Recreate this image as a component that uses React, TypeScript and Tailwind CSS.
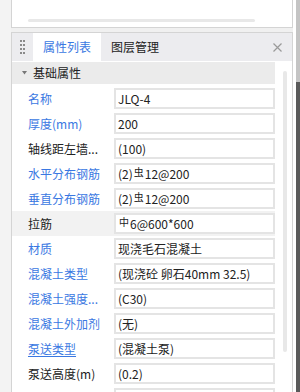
import React from 'react';

type Row = {
    name: string;
    value: React.ReactNode;
    link?: boolean;
    underline?: boolean;
    active?: boolean;
};

const Bar = ({ kind }: { kind: 'a' | 'c' }) => (
    <span className="relative top-[-2px] mx-[1px] text-[10px] leading-none">{kind === 'c' ? '虫' : '中'}</span>
);

const rows: Row[] = [
    { name: '名称', value: 'JLQ-4', link: true },
    { name: '厚度(mm)', value: '200', link: true },
    { name: '轴线距左墙...', value: '(100)' },
    { name: '水平分布钢筋', value: <>(2)<Bar kind="c" />12@200</>, link: true },
    { name: '垂直分布钢筋', value: <>(2)<Bar kind="c" />12@200</>, link: true },
    { name: '拉筋', value: <><Bar kind="a" />6@600*600</>, active: true },
    { name: '材质', value: '现浇毛石混凝土', link: true },
    { name: '混凝土类型', value: '(现浇砼 卵石40mm 32.5)', link: true },
    { name: '混凝土强度...', value: '(C30)', link: true },
    { name: '混凝土外加剂', value: '(无)', link: true },
    { name: '泵送类型', value: '(混凝土泵)', link: true, underline: true },
    { name: '泵送高度(m)', value: '(0.2)' },
    { name: '', value: '' },
];

const PropRow = ({ row }: { row: Row }) => (
    <div className={`flex h-[25px] items-center ${row.active ? 'bg-[#f2f2f2]' : ''}`}>
        <div
            className={`w-[102px] shrink-0 pl-[16px] whitespace-nowrap ${row.link ? 'text-[#3a78e2]' : 'text-[#222]'} ${row.underline ? 'underline underline-offset-2' : ''}`}
        >
            {row.name}
        </div>
        <div className="flex h-[21px] w-[161px] shrink-0 items-center whitespace-nowrap border-2 border-[#e4e4e4] bg-white pl-[2px] text-[#222]">
            {row.value}
        </div>
    </div>
);

export default function App() {
    return (
        <div
            className="flex h-[392px] w-[300px] overflow-hidden bg-[#f3f3f3] text-[12px]"
            style={{ fontFamily: '"Noto Sans CJK SC", "Noto Sans", sans-serif' }}
        >
            <div className="w-[11px] shrink-0 bg-[#f3f3f3]" />
            <div className="flex w-[282px] shrink-0 flex-col">
                {/* upper panel */}
                <div className="h-[28px] shrink-0 border-x border-b border-[#d4d4d4] bg-white pt-[19px] pl-[16px]">
                    <div className="h-[3px] w-[227px] rounded-full bg-[#e8e8e8]" />
                </div>
                <div className="h-[4px] shrink-0 bg-[#f0f0f0]" />
                {/* property panel */}
                <div className="flex flex-1 flex-col border-x border-t border-[#d4d4d4] bg-white">
                    <div className="flex h-[28px] shrink-0 items-stretch bg-[#ececef]">
                        <div className="grid w-[21px] grid-cols-2 content-center justify-items-center gap-y-[2px] px-[7px]">
                            {Array.from({ length: 8 }).map((_, i) => (
                                <span key={i} className="h-[2px] w-[2px] bg-[#8a8a8a]" />
                            ))}
                        </div>
                        <div className="flex w-[68px] items-center bg-white pl-[10px] text-[#3a78e2]">属性列表</div>
                        <div className="flex items-center pl-[10px] text-[#222]">图层管理</div>
                        <div className="ml-auto flex items-center pr-[10px]">
                            <svg width="9" height="9" viewBox="0 0 9 9">
                                <path d="M0.5 0.5L8.5 8.5M8.5 0.5L0.5 8.5" stroke="#9a9a9a" strokeWidth="1.2" />
                            </svg>
                        </div>
                    </div>
                    <div className="flex flex-1">
                        <div className="w-[263px] shrink-0 pt-[1px]">
                            <div className="flex h-[22px] items-center bg-[#ebebeb] pl-[10px] text-[#222]">
                                <svg width="5" height="4" viewBox="0 0 5 4" className="mr-[6px]">
                                    <path d="M0 0H5L2.5 3.5Z" fill="#777" />
                                </svg>
                                基础属性
                            </div>
                            <div className="mt-[2px]">
                                {rows.map((row, i) => (
                                    <PropRow key={i} row={row} />
                                ))}
                            </div>
                        </div>
                        <div className="flex-1 pt-[10px] pl-[8px]">
                            <div className="h-[281px] w-[4px] rounded-full bg-[#e8e8e8]" />
                        </div>
                    </div>
                </div>
            </div>
            <div className="w-[3px] shrink-0 bg-white" />
            <div className="flex w-[4px] shrink-0 flex-col">
                <div className="h-[82px] bg-[#c4c4c4]" />
                <div className="flex-1 bg-[#5a5a5a]" />
            </div>
        </div>
    );
}
